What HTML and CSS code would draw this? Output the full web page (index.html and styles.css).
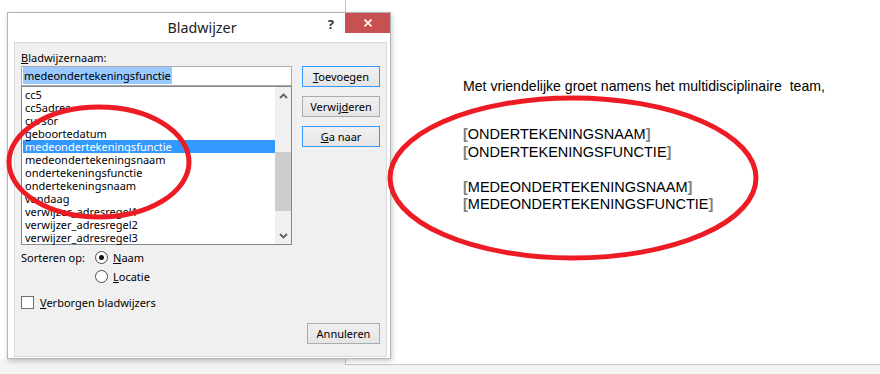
FILE: index.html
```html
<!DOCTYPE html>
<html lang="nl">
<head>
  <meta charset="UTF-8">
  <meta name="viewport" content="width=device-width, initial-scale=1.0">
  <title>Bladwijzer</title>
  <link rel="stylesheet" href="styles.css">
</head>
<body>
  <div class="screen">
    <div class="desk">
      <div class="side"></div>
      <div class="document">
        <p class="greeting">Met vriendelijke groet namens het multidisciplinaire&nbsp; team,</p>
        <div class="fields">
          <div><span class="br">[</span>ONDERTEKENINGSNAAM<span class="br">]</span></div>
          <div><span class="br">[</span>ONDERTEKENINGSFUNCTIE<span class="br">]</span></div>
          <div>&nbsp;</div>
          <div><span class="br">[</span>MEDEONDERTEKENINGSNAAM<span class="br">]</span></div>
          <div><span class="br">[</span>MEDEONDERTEKENINGSFUNCTIE<span class="br">]</span></div>
        </div>
      </div>
    </div>
    <div class="statusbar"></div>

    <div class="dialog">
      <div class="titlebar">
        <div></div>
        <div class="title">Bladwijzer</div>
        <div class="title-tools">
          <span class="help">?</span>
          <span class="close">
            <svg width="8" height="8" viewBox="0 0 8 8"><path d="M0.5 0.5 L7.5 7.5 M7.5 0.5 L0.5 7.5" stroke="#fff" stroke-width="1.6"/></svg>
          </span>
        </div>
      </div>

      <div class="panel">
        <div class="panel-top">
          <div class="main-col">
            <div class="label"><u>B</u>ladwijzernaam:</div>
            <div class="name-input"><span class="sel">medeondertekeningsfunctie</span></div>
            <div class="listbox">
              <ul class="items">
                <li>cc5</li>
                <li>cc5adres</li>
                <li>cursor</li>
                <li>geboortedatum</li>
                <li class="active">medeondertekeningsfunctie</li>
                <li>medeondertekeningsnaam</li>
                <li>ondertekeningsfunctie</li>
                <li>ondertekeningsnaam</li>
                <li>vandaag</li>
                <li>verwijzer_adresregel1</li>
                <li>verwijzer_adresregel2</li>
                <li>verwijzer_adresregel3</li>
              </ul>
              <div class="scrollbar">
                <div class="arrow">
                  <svg width="9" height="6" viewBox="0 0 9 6"><path d="M1 5 L4.5 1.5 L8 5" fill="none" stroke="#606060" stroke-width="1.8"/></svg>
                </div>
                <div class="track"><div class="thumb"></div></div>
                <div class="arrow">
                  <svg width="9" height="6" viewBox="0 0 9 6"><path d="M1 1 L4.5 4.5 L8 1" fill="none" stroke="#606060" stroke-width="1.8"/></svg>
                </div>
              </div>
            </div>
          </div>
          <div class="btn-col">
            <button class="btn default"><u>T</u>oevoegen</button>
            <button class="btn">Verwij<u>d</u>eren</button>
            <button class="btn default"><u>G</u>a naar</button>
          </div>
        </div>

        <div class="sort">
          <div class="sort-label">Sorteren op:</div>
          <div class="radios">
            <label class="radio-row"><span class="radio checked"></span><span><u>N</u>aam</span></label>
            <label class="radio-row"><span class="radio"></span><span><u>L</u>ocatie</span></label>
          </div>
        </div>

        <label class="check-row"><span class="checkbox"></span><span><u>V</u>erborgen bladwijzers</span></label>

        <div class="footer-row">
          <button class="btn cancel">Annuleren</button>
        </div>
      </div>
    </div>

    <svg class="marks" width="880" height="374" viewBox="0 0 880 374">
      <ellipse cx="99" cy="162" rx="90" ry="55" fill="none" stroke="#ed1c24" stroke-width="5"/>
      <ellipse cx="573" cy="178" rx="183" ry="80" fill="none" stroke="#ed1c24" stroke-width="5"/>
    </svg>
  </div>
</body>
</html>
```

FILE: styles.css
```css
body {
  margin: 0;
  background: #fff;
}
.screen {
  position: relative;
  width: 880px;
  height: 374px;
  overflow: hidden;
  background: #f3f3f3;
}
.desk {
  display: flex;
  height: 365px;
}
.side {
  width: 345px;
  background: linear-gradient(#fff 0 359px, #f3f3f3 359px);
}
.document {
  flex: 1;
  background: #fff;
  border-left: 1px solid #c6c6c6;
  border-bottom: 1px solid #c6c6c6;
  padding: 77px 0 0 117px;
  font-family: "Liberation Sans", Arial, sans-serif;
  font-size: 14.5px;
  color: #000;
}
.greeting {
  margin: 0;
  line-height: 18px;
  font-size: 14.1px;
}
.fields {
  margin-top: 31px;
  line-height: 17.5px;
}
.br {
  color: #808080;
  font-weight: bold;
}

/* dialog window */
.dialog {
  position: absolute;
  left: 7px;
  top: 12px;
  width: 382px;
  height: 345px;
  background: #fff;
  border: 1px solid #b4b4b4;
  box-shadow: 1px 2px 5px rgba(0, 0, 0, 0.22);
  font-family: "Noto Sans", "Open Sans", sans-serif;
  font-size: 11px;
  color: #000;
}
.titlebar {
  display: grid;
  grid-template-columns: 74px 1fr 74px;
  height: 29px;
}
.title {
  text-align: center;
  font-size: 14.3px;
  line-height: 30px;
  color: #222;
  padding-left: 6px;
}
.title-tools {
  display: flex;
  justify-content: flex-end;
  align-items: flex-start;
}
.help {
  font-weight: bold;
  font-size: 13px;
  line-height: 20px;
  color: #333;
  margin-right: 11px;
  margin-top: 1px;
}
.close {
  width: 45px;
  height: 20px;
  background: #c75050;
  display: flex;
  align-items: center;
  justify-content: center;
}

.panel {
  margin: 0 3px 0 6px;
  height: 306px;
  background: #f0f0f0;
  border: 1px solid #d9d9d9;
  padding: 7px 6px 0 6px;
}
.panel-top {
  display: flex;
  gap: 10px;
}
.main-col {
  width: 271px;
  flex-shrink: 0;
}
.label {
  line-height: 16px;
  height: 16px;
}
.name-input {
  height: 18px;
  border: 1px solid #ababab;
  background: #fff;
  padding: 0 1px;
  line-height: 18px;
}
.sel {
  background: #99c9ff;
  padding: 1px 1px;
}
.listbox {
  display: flex;
  height: 157px;
  border: 1px solid #828790;
  background: #fff;
}
.items {
  list-style: none;
  margin: 1px 0 0 1px;
  padding: 0;
  flex: 1;
}
.items li {
  height: 13px;
  line-height: 13px;
  padding-left: 2px;
  white-space: nowrap;
}
.items li.active {
  background: #3399ff;
  color: #fff;
}
.scrollbar {
  width: 16px;
  display: flex;
  flex-direction: column;
  background: #f0f0f0;
}
.arrow {
  height: 17px;
  display: flex;
  align-items: center;
  justify-content: center;
}
.track {
  flex: 1;
  padding-top: 48px;
}
.thumb {
  height: 59px;
  background: #cdcdcd;
}

.btn-col {
  display: flex;
  flex-direction: column;
  gap: 9px;
  padding-top: 16px;
}
.btn {
  width: 78px;
  height: 21px;
  padding: 0;
  font-family: inherit;
  font-size: 11px;
  color: #000;
  background: linear-gradient(#f0f0f0, #e5e5e5);
  border: 1px solid #acacac;
}
.btn.default {
  border-color: #3399ff;
}
.btn.cancel {
  width: 73px;
}

.sort {
  display: flex;
  margin-top: 3px;
}
.sort-label {
  width: 74px;
  line-height: 19px;
}
.radio-row, .check-row {
  display: flex;
  align-items: center;
  gap: 5px;
  height: 19px;
}
.radio {
  width: 11px;
  height: 11px;
  border: 1px solid #4d4d4d;
  border-radius: 50%;
  background: #fff;
  display: flex;
  align-items: center;
  justify-content: center;
}
.radio.checked::after {
  content: "";
  width: 5px;
  height: 5px;
  border-radius: 50%;
  background: #111;
}
.check-row {
  margin-top: 7px;
  gap: 6px;
}
.checkbox {
  width: 11px;
  height: 11px;
  border: 1px solid #707070;
  background: #fff;
}
.footer-row {
  display: flex;
  justify-content: flex-end;
  margin-top: 11px;
}

.marks {
  position: absolute;
  left: 0;
  top: 0;
  pointer-events: none;
}
```
